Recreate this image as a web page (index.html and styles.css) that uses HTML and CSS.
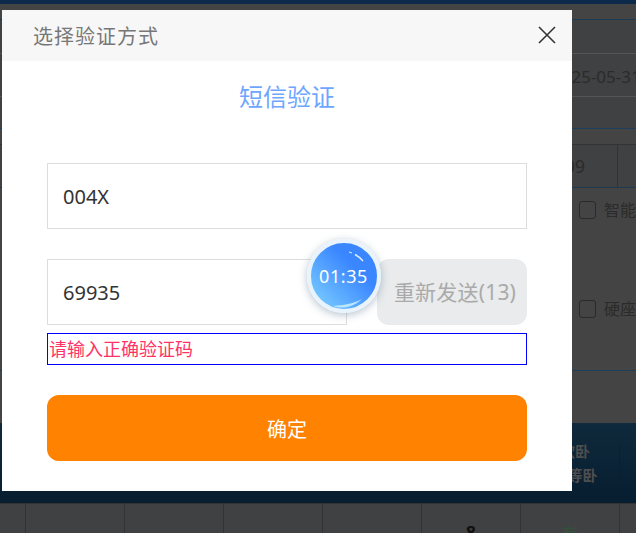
FILE: index.html
```html
<!DOCTYPE html>
<html lang="zh-CN">
<head>
    <meta charset="UTF-8">
    <meta name="viewport" content="width=device-width, initial-scale=1.0">
    <title>选择验证方式</title>
    <link rel="stylesheet" href="styles.css">
</head>
<body>
    <!-- dimmed page behind the dialog -->
    <div class="page">
        <div class="top-bar"></div>
        <div class="band band-a"></div>
        <div class="band band-b"></div>
        <div class="band band-date">2025-05-31</div>
        <div class="band band-c"></div>
        <div class="band band-d"></div>
        <div class="seat-row">
            <div class="seat-cell">09</div>
        </div>
        <div class="options">
            <div class="option"><span class="check"></span>智能</div>
            <div class="option"><span class="check"></span>硬座</div>
        </div>
        <div class="band band-e"></div>
        <div class="train-head">
            <div class="train-type"><span class="train-name">软卧<br>一等卧</span></div>
        </div>
        <div class="table-row">
            <div class="cell cell-first"></div>
            <div class="cell"></div>
            <div class="cell"></div>
            <div class="cell"></div>
            <div class="cell"></div>
            <div class="cell cell-num">8</div>
            <div class="cell cell-have">有</div>
        </div>
    </div>

    <!-- verification dialog -->
    <div class="dialog">
        <div class="dialog-head">
            <span class="dialog-title">选择验证方式</span>
            <svg class="close-icon" width="20" height="20" viewBox="0 0 20 20">
                <path d="M2 2L18 18M18 2L2 18" stroke="#333" stroke-width="1.6" fill="none"/>
            </svg>
        </div>
        <div class="dialog-body">
            <h2 class="sub-title">短信验证</h2>
            <input class="field" type="text" value="004X">
            <div class="code-row">
                <input class="field field-code" type="text" value="69935">
                <button class="resend">重新发送(13)</button>
                <div class="timer">
                    <svg class="timer-shine" width="66" height="66" viewBox="0 0 66 66">
                        <path d="M38 9L41 10" stroke="#dcecff" stroke-width="1" fill="none"/>
                        <path d="M44 11.5C47 13 50 15.5 52 18" stroke="#e4f0ff" stroke-width="1.4" fill="none"/>
                        <path d="M22 63C32 62 42 61 51 56C44 63 32 67 22 63Z" fill="#b8e6ff"/>
                    </svg>
                    <span class="timer-text">01:35</span>
                </div>
            </div>
            <div class="error-box">请输入正确验证码</div>
            <button class="confirm">确定</button>
        </div>
    </div>
</body>
</html>
```

FILE: styles.css
```css
* {
    box-sizing: border-box;
}
html, body {
    margin: 0;
    height: 533px;
    overflow: hidden;
}
body {
    position: relative;
    background: #444;
    font-family: "Noto Sans", "Noto Sans CJK SC", sans-serif;
    color: #2b2b2b;
}

/* page behind the overlay */
.page {
    height: 533px;
    display: flex;
    flex-direction: column;
    overflow: hidden;
}
.top-bar {
    flex: none;
    height: 4px;
    background: #0e2a4b;
}
.band {
    flex: none;
    border-bottom: 1px solid #555;
}
.band-a {
    height: 16px;
    border-bottom-color: #1d3a52;
}
.band-b {
    height: 34px;
    background: #404142;
}
.band-date {
    height: 43px;
    padding-left: 552px;
    background: #404142;
    font-size: 17px;
    line-height: 45px;
    white-space: nowrap;
}
.band-c {
    height: 32px;
    background: #404142;
    border-bottom-color: #1b3f5c;
}
.band-d {
    height: 15px;
    border-bottom: none;
}
.seat-row {
    flex: none;
    height: 44px;
    background: #404142;
    border-top: 1px solid #333;
    border-bottom: 1px solid #1f3a50;
}
.seat-cell {
    width: 618px;
    height: 100%;
    padding-right: 32px;
    border-right: 1px solid #333;
    text-align: right;
    font-size: 18px;
    line-height: 42px;
}
.options {
    flex: none;
    height: 182px;
    padding: 10px 0 0 579px;
    display: flex;
    flex-direction: column;
    gap: 75px;
}
.option {
    display: flex;
    align-items: center;
    gap: 8px;
    font-size: 16px;
    line-height: 24px;
    white-space: nowrap;
}
.check {
    width: 18px;
    height: 18px;
    border: 1.5px solid #2a2a2a;
    border-radius: 3px;
}
.band-e {
    height: 53px;
    border-top: 1px solid #1b3f5c;
    border-bottom: none;
}
.train-head {
    flex: none;
    height: 80px;
    display: flex;
    align-items: center;
    padding-left: 520px;
    background: linear-gradient(#0f2a3c, #071d30);
}
.train-type {
    width: 100px;
    height: 38px;
    padding-left: 11px;
    display: flex;
    align-items: center;
    justify-content: center;
    border-right: 1px solid #0a1f30;
    text-align: center;
    font-size: 15px;
    font-weight: bold;
    line-height: 24px;
    color: #4d4d4d;
}
.train-name {
    display: block;
    flex: none;
}
.table-row {
    flex: none;
    height: 60px;
    display: flex;
    background: #404142;
    border-top: 1px solid #333;
}
.cell {
    flex: none;
    width: 99px;
    padding-top: 16px;
    border-right: 1px solid #333;
    text-align: center;
    font-size: 18px;
}
.cell-first {
    width: 26px;
}
.cell-num {
    font-weight: bold;
    color: #111;
}
.cell-have {
    color: #34513a;
}

/* dialog */
.dialog {
    position: absolute;
    left: 2px;
    top: 10px;
    width: 570px;
    height: 481px;
    background: #fff;
}
.dialog-head {
    height: 51px;
    padding: 0 15px 0 31px;
    display: flex;
    align-items: center;
    justify-content: space-between;
    background: #f7f7f7;
}
.dialog-title {
    font-size: 20px;
    letter-spacing: 1px;
    color: #777;
}
.close-icon {
    margin-bottom: 2px;
}
.dialog-body {
    padding: 20px 45px 0;
    display: flex;
    flex-direction: column;
}
.sub-title {
    margin: 0 0 50px;
    text-align: center;
    font-size: 24px;
    font-weight: normal;
    line-height: 32px;
    color: #6ea6ff;
}
.field {
    width: 100%;
    height: 66px;
    padding: 0 15px;
    border: 1px solid #ddd;
    outline: none;
    font-family: inherit;
    font-size: 20px;
    color: #333;
}
.code-row {
    position: relative;
    margin-top: 30px;
    display: flex;
    gap: 30px;
}
.field-code {
    width: 300px;
}
.resend {
    width: 150px;
    height: 66px;
    padding: 0 0 3px 6px;
    border: none;
    border-radius: 12px;
    background: #e9ebec;
    font-family: inherit;
    font-size: 21px;
    letter-spacing: 0.2px;
    color: #aaa;
}
.timer {
    position: absolute;
    left: 260px;
    top: -20px;
    width: 74px;
    height: 74px;
    display: flex;
    align-items: center;
    justify-content: center;
    border: 4px solid #e8f3fb;
    border-radius: 50%;
    background: linear-gradient(45deg, #80d4ff, #3a86ff 65%);
    box-shadow: 0 2px 8px rgba(90, 120, 150, 0.45);
}
.timer-shine {
    position: absolute;
    left: 0;
    top: 0;
}
.timer-text {
    position: relative;
    margin-right: 1px;
    font-size: 18px;
    letter-spacing: 0.6px;
    color: #fff;
}
.error-box {
    height: 32px;
    margin-top: 8px;
    padding-left: 1px;
    border: 1px solid #00f;
    font-size: 18px;
    line-height: 30px;
    color: #f36;
}
.confirm {
    height: 66px;
    margin-top: 30px;
    padding: 0;
    border: none;
    border-radius: 12px;
    background: #ff8200;
    font-family: inherit;
    font-size: 20px;
    color: #fff;
}
```
